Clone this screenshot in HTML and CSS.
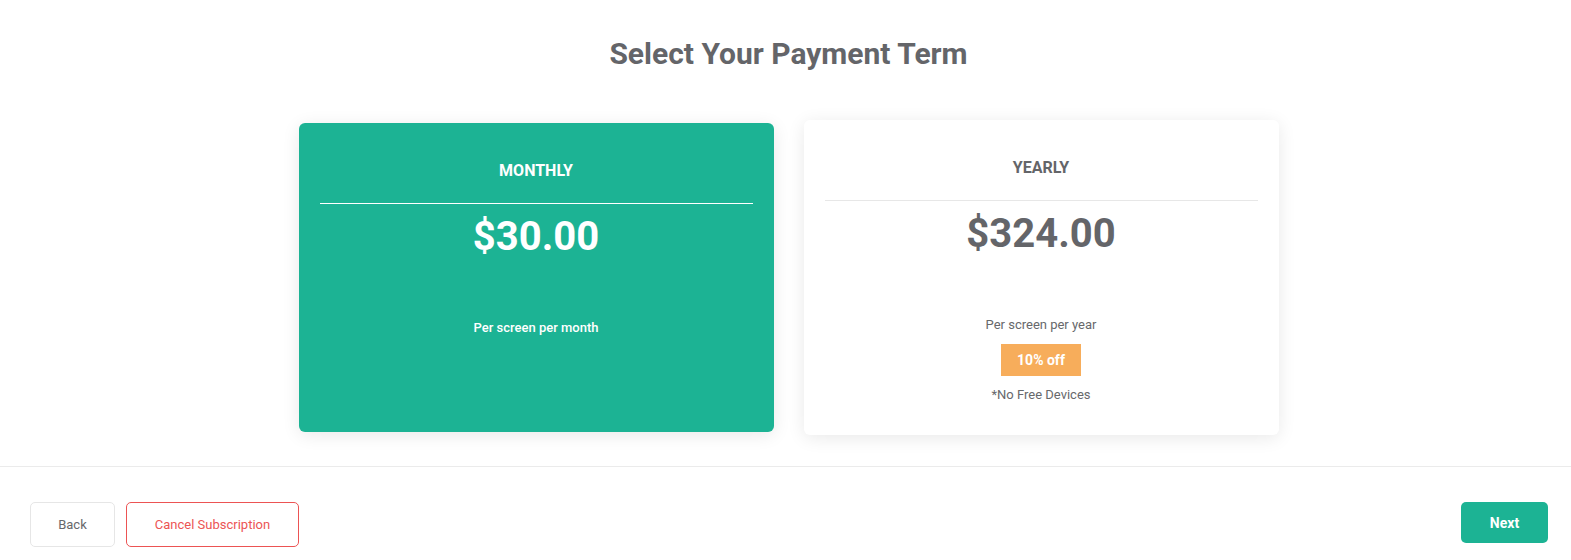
FILE: index.html
```html
<!DOCTYPE html>
<html lang="en">
<head>
<meta charset="utf-8">
<title>Select Your Payment Term</title>
<link rel="stylesheet" href="styles.css">
</head>
<body>
<main class="page">
  <section class="terms">
    <h1 class="title">Select Your Payment Term</h1>
    <div class="cards">
      <div class="card card--selected">
        <div class="card-head">MONTHLY</div>
        <div class="card-price">$30.00</div>
        <div class="card-desc">Per screen per month</div>
      </div>
      <div class="card">
        <div class="card-head">YEARLY</div>
        <div class="card-price">$324.00</div>
        <div class="card-desc">Per screen per year</div>
        <div class="badge">10% off</div>
        <div class="card-note">*No Free Devices</div>
      </div>
    </div>
  </section>
  <footer class="actions">
    <div class="actions-left">
      <button class="btn btn--back">Back</button>
      <button class="btn btn--cancel">Cancel Subscription</button>
    </div>
    <button class="btn btn--next">Next</button>
  </footer>
</main>
</body>
</html>
```
FILE: styles.css
```css
* { box-sizing: border-box; }
html, body { margin: 0; padding: 0; background: #fff; }
body {
  font-family: Roboto, "Liberation Sans", Arial, sans-serif;
  color: #67686b;
}
.terms {
  padding: 36px 0 31px 6px;
  border-bottom: 1px solid #ebebeb;
}
.title {
  margin: 0;
  font-size: 30px;
  line-height: 36px;
  font-weight: 700;
  text-align: center;
  color: #646569;
}
.cards {
  margin-top: 48px;
  display: flex;
  justify-content: center;
  align-items: center;
  gap: 30px;
}
.card {
  width: 475px;
  background: #fff;
  border-radius: 6px;
  box-shadow: 0 3px 18px rgba(0, 0, 0, 0.09);
  padding: 38px 21px 31px;
  text-align: center;
  color: #646569;
}
.card--selected {
  background: #1cb394;
  color: #fff;
  padding-bottom: 95px;
}
.card-head {
  font-size: 16px;
  line-height: 20px;
  font-weight: 700;
  padding-bottom: 22px;
  border-bottom: 1px solid #e7e7e7;
}
.card--selected .card-head { border-bottom-color: #fff; }
.card-price {
  margin-top: 7px;
  font-size: 40px;
  line-height: 52px;
  font-weight: 700;
}
.card-desc {
  margin-top: 56px;
  font-size: 13px;
  line-height: 18px;
  color: #67686b;
}
.card--selected .card-desc { color: #fff; font-weight: 500; }
.badge {
  margin: 10px auto 0;
  width: 80px;
  height: 32px;
  line-height: 32px;
  background: #f7ad5b;
  color: #fff;
  font-size: 14px;
  font-weight: 700;
}
.card-note {
  margin-top: 10px;
  font-size: 13px;
  line-height: 18px;
  color: #67686b;
}
.actions {
  display: flex;
  justify-content: space-between;
  align-items: flex-start;
  padding: 35px 23px 0 30px;
}
.actions-left { display: flex; gap: 11px; }
.btn {
  font-family: Roboto, "Liberation Sans", Arial, sans-serif;
  font-size: 13px;
  background: #fff;
  border-radius: 5px;
  cursor: pointer;
}
.btn--back {
  width: 85px;
  height: 45px;
  border: 1px solid #e6e6e6;
  color: #67686b;
}
.btn--cancel {
  width: 173px;
  height: 45px;
  border: 1px solid #ec5454;
  color: #ec5454;
}
.btn--next {
  width: 87px;
  height: 41px;
  border: none;
  background: #1cb394;
  color: #fff;
  font-size: 14px;
  font-weight: 700;
}
```
